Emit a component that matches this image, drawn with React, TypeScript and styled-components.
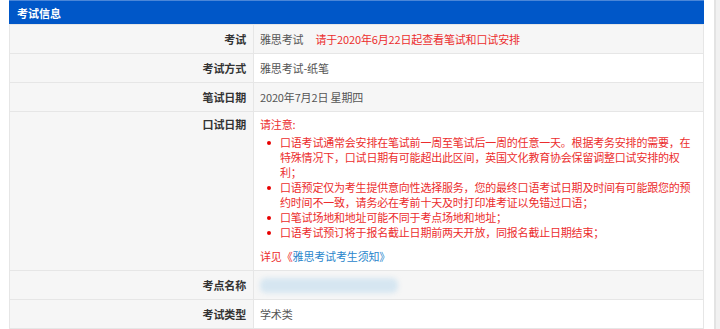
import { Fragment } from "react";
import styled, { createGlobalStyle } from "styled-components";

const GlobalStyle = createGlobalStyle`
  html, body {
    margin: 0;
    padding: 0;
    background: #ffffff;
  }
  body {
    font-family: "Noto Sans CJK SC", "Noto Sans", sans-serif;
    font-size: 11px;
    color: #555;
  }
`;

const Page = styled.div`
  display: flex;
  align-items: stretch;
  height: 329px;
  overflow: hidden;
`;

const Panel = styled.div`
  margin-left: 9px;
  width: 695px;
  flex: none;
`;

const ScrollEdge = styled.div`
  margin-left: 10px;
  width: 6px;
  background: #f1f1f1;
  border-left: 2px solid #e3e3e3;
`;

const Header = styled.div`
  height: 24px;
  box-sizing: border-box;
  background: #0057c8;
  border-top: 1px solid #4a86d8;
  color: #fff;
  font-weight: bold;
  padding-left: 8px;
  display: flex;
  align-items: center;
`;

const Table = styled.table`
  width: 100%;
  border-collapse: collapse;
  table-layout: fixed;
  font-size: 11px;
  letter-spacing: -0.15px;
`;

const Label = styled.th<{ $top?: boolean }>`
  width: 236px;
  background: #f6f6f6;
  border: 1px solid #e6e6e6;
  color: #333;
  font-weight: bold;
  text-align: right;
  padding: 0 7px 0 0;
  height: 28px;
  vertical-align: ${(p) => (p.$top ? "top" : "middle")};
  padding-top: ${(p) => (p.$top ? "5px" : "0")};
  line-height: 15px;
`;

const Value = styled.td<{ $shade?: boolean }>`
  background: ${(p) => (p.$shade ? "#f6f6f6" : "#ffffff")};
  border: 1px solid #e6e6e6;
  padding: 0 12px 0 6px;
  height: 28px;
  line-height: 15px;
  vertical-align: middle;
`;

const NoteCell = styled(Value)`
  vertical-align: top;
  padding-top: 5px;
  padding-bottom: 6px;
`;

const Red = styled.span`
  color: #ec2d2d;
`;

const Notice = styled(Red)`
  margin-left: 12px;
`;

const NoteTitle = styled.div`
  color: #ec2d2d;
`;

const NoteList = styled.ul`
  margin: 3px 0 9px;
  padding-left: 20px;
  color: #ec2d2d;
  list-style: none;
  white-space: nowrap;
  letter-spacing: -0.2px;
`;

const NoteItem = styled.li`
  position: relative;
  &::before {
    content: "";
    position: absolute;
    left: -13px;
    top: 6px;
    width: 4px;
    height: 4px;
    border-radius: 50%;
    background: #e80000;
  }
`;

const Link = styled.a`
  color: #2a86cc;
  text-decoration: none;
`;

const Blurred = styled.div`
  width: 138px;
  height: 15px;
  border-radius: 6px;
  background: #d6e6f1;
  filter: blur(2.5px);
`;

const notes: string[][] = [
  [
    "口语考试通常会安排在笔试前一周至笔试后一周的任意一天。根据考务安排的需要，在",
    "特殊情况下，口试日期有可能超出此区间，英国文化教育协会保留调整口试安排的权",
    "利；",
  ],
  [
    "口语预定仅为考生提供意向性选择服务，您的最终口语考试日期及时间有可能跟您的预",
    "约时间不一致，请务必在考前十天及时打印准考证以免错过口语；",
  ],
  ["口笔试场地和地址可能不同于考点场地和地址；"],
  ["口语考试预订将于报名截止日期前两天开放，同报名截止日期结束；"],
];

export default function App() {
  return (
    <>
      <GlobalStyle />
      <Page>
        <Panel>
          <Header>考试信息</Header>
          <Table>
            <tbody>
              <tr>
                <Label>考试</Label>
                <Value $shade>
                  雅思考试<Notice>请于2020年6月22日起查看笔试和口试安排</Notice>
                </Value>
              </tr>
              <tr>
                <Label>考试方式</Label>
                <Value>雅思考试-纸笔</Value>
              </tr>
              <tr>
                <Label>笔试日期</Label>
                <Value $shade>2020年7月2日 星期四</Value>
              </tr>
              <tr>
                <Label $top>口试日期</Label>
                <NoteCell>
                  <NoteTitle>请注意:</NoteTitle>
                  <NoteList>
                    {notes.map((lines) => (
                      <NoteItem key={lines[0]}>
                        {lines.map((line, i) => (
                          <Fragment key={line}>
                            {i > 0 && <br />}
                            {line}
                          </Fragment>
                        ))}
                      </NoteItem>
                    ))}
                  </NoteList>
                  <Red>详见《</Red>
                  <Link href="#">雅思考试考生须知》</Link>
                </NoteCell>
              </tr>
              <tr>
                <Label>考点名称</Label>
                <Value $shade>
                  <Blurred />
                </Value>
              </tr>
              <tr>
                <Label>考试类型</Label>
                <Value>学术类</Value>
              </tr>
            </tbody>
          </Table>
        </Panel>
        <ScrollEdge />
      </Page>
    </>
  );
}
